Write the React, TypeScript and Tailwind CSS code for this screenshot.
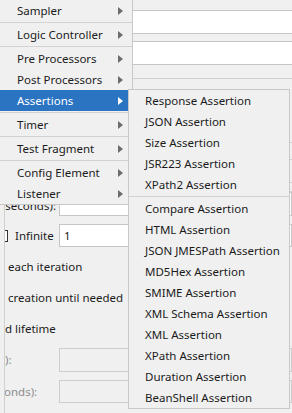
import React from "react";

const Arrow = ({ white }: { white?: boolean }) => (
  <svg width="5" height="8" viewBox="0 0 5 8" className="shrink-0">
    <path d="M0 0 L5 4 L0 8 Z" fill={white ? "#ffffff" : "#6b6b6b"} />
  </svg>
);

const MainItem = ({ label, active }: { label: string; active?: boolean }) => (
  <div
    className={
      "h-[21px] flex items-center pl-[17px] pr-[9px] " +
      (active ? "bg-[#2b74c2] text-white" : "text-[#1b1b1b]")
    }
  >
    <span className="flex-1 whitespace-nowrap leading-none">{label}</span>
    <Arrow white={active} />
  </div>
);

const Sep = () => (
  <div className="h-[3px] flex flex-col justify-center">
    <div className="h-px bg-[#d2d2d2]" />
  </div>
);

const SubItem = ({ label }: { label: string }) => (
  <div className="h-[21px] flex items-center pl-[16px] whitespace-nowrap leading-none text-[#1b1b1b]">
    {label}
  </div>
);

export default function App() {
  const group1 = [
    "Response Assertion",
    "JSON Assertion",
    "Size Assertion",
    "JSR223 Assertion",
    "XPath2 Assertion",
  ];
  const group2 = [
    "Compare Assertion",
    "HTML Assertion",
    "JSON JMESPath Assertion",
    "MD5Hex Assertion",
    "SMIME Assertion",
    "XML Schema Assertion",
    "XML Assertion",
    "XPath Assertion",
    "Duration Assertion",
    "BeanShell Assertion",
  ];
  return (
    <div className="relative w-[292px] h-[413px] bg-[#f0f0f0] overflow-hidden font-['Noto_Sans',sans-serif] text-[11.5px] text-[#1b1b1b]">
      {/* background form */}
      <div className="flex flex-col">
        <div className="h-[10px]" />
        <div className="h-[24px] ml-[60px] bg-white border-y border-[#c6c6c6]" />
        <div className="h-[7px]" />
        <div className="h-[24px] ml-[60px] bg-white border-y border-[#c6c6c6]" />
        <div className="h-[13px]" />
        <div className="h-px bg-[#cfcfcf]" />
        <div className="h-[63px]" />
        <div className="h-[18px] border-y border-[#d0d0d0]" />
        <div className="h-[22px]" />
        <div className="h-[10px] border-y border-[#d0d0d0]" />
        <div className="ml-[4px] border-l border-[#d0d0d0] overflow-hidden flex flex-col">
          <div className="h-[24px] flex">
            <div className="w-[54px] flex items-end justify-end overflow-hidden whitespace-nowrap pb-[5px] pr-[3px] leading-none">
              Ramp-up period (seconds):
            </div>
            <div className="flex-1 bg-white border border-[#c6c6c6]" />
          </div>
          <div className="h-[8px]" />
          <div className="h-[23px] flex items-center">
            <div className="w-[11px] h-[12px] ml-[-8px] border border-[#333333] bg-white shrink-0" />
            <span className="ml-[7px] w-[44px] whitespace-nowrap">Infinite</span>
            <div className="flex-1 h-full bg-white border border-[#c6c6c6] flex items-center pl-[4px]">
              1
            </div>
          </div>
          <div className="h-[40px] flex items-center pl-[3px] whitespace-nowrap">each iteration</div>
          <div className="h-[22px] flex items-center pl-[3px] whitespace-nowrap">creation until needed</div>
          <div className="h-[39px] flex items-center whitespace-nowrap">d lifetime</div>
          <div className="h-[24px] flex">
            <div className="w-[54px] flex items-center whitespace-nowrap text-[#8c8c8c]">):</div>
            <div className="flex-1 border border-[#cdcdcd]" />
          </div>
          <div className="h-[8px]" />
          <div className="h-[23px] flex">
            <div className="w-[54px] flex items-center whitespace-nowrap text-[#8c8c8c] ml-[-1px]">onds):</div>
            <div className="flex-1 border border-[#cdcdcd] ml-[1px]" />
          </div>
          <div className="h-[20px]" />
        </div>
      </div>

      {/* main popup menu */}
      <div className="absolute left-0 top-0 w-[133px] bg-[#f0f0f0] border-r border-b border-[#c8c8c8]">
        <MainItem label="Sampler" />
        <Sep />
        <MainItem label="Logic Controller" />
        <Sep />
        <MainItem label="Pre Processors" />
        <MainItem label="Post Processors" />
        <MainItem label="Assertions" active />
        <Sep />
        <MainItem label="Timer" />
        <Sep />
        <MainItem label="Test Fragment" />
        <Sep />
        <MainItem label="Config Element" />
        <MainItem label="Listener" />
      </div>

      {/* submenu */}
      <div className="absolute left-[128px] top-[89px] w-[162px] bg-[#f0f0f0] border border-[#c8c8c8]">
        {group1.map((l) => (
          <SubItem key={l} label={l} />
        ))}
        <Sep />
        {group2.map((l) => (
          <SubItem key={l} label={l} />
        ))}
      </div>
    </div>
  );
}
